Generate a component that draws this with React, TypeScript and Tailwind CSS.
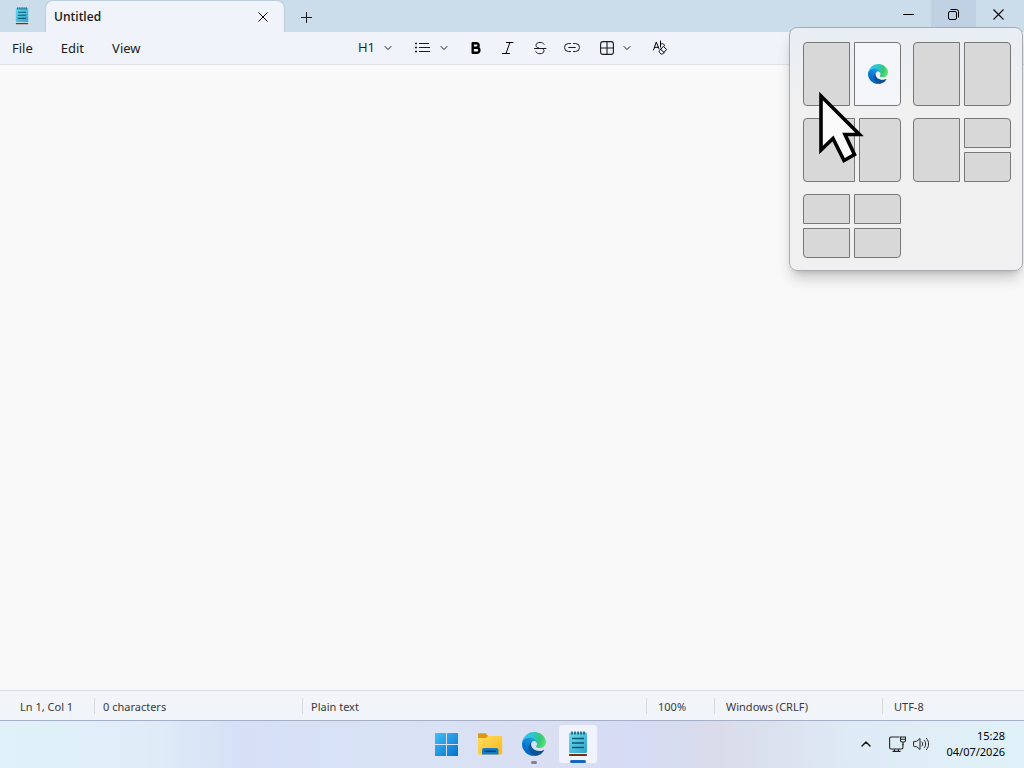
import React, { PropsWithChildren, useId, useState } from "react";
import { ChevronDown, ChevronUp } from "lucide-react";

type ToolButtonProps = PropsWithChildren<{
	label: string;
	menu?: boolean;
	className?: string;
}>;

type IconProps = {
	className?: string;
};

const statusItems = [
	{ text: "Ln 1, Col 1", className: "w-[94px] pl-5" },
	{ text: "0 characters", className: "w-[208px] border-l pl-2" },
	{ text: "Plain text", className: "flex-1 border-l pl-2" },
	{ text: "100%", className: "w-[68px] border-l pl-[11px]" },
	{ text: "Windows (CRLF)", className: "w-[168px] border-l pl-[11px]" },
	{ text: "UTF-8", className: "w-[142px] border-l pl-[11px]" },
];

export default function App() {
	return (
		<div className="relative flex h-screen flex-col overflow-hidden bg-[#f9f9f9] font-['Noto_Sans','Open_Sans',sans-serif] text-[#1b1b1b]">
			<TitleBar />
			<Toolbar />
			<Editor />
			<StatusBar />
			<Taskbar />
			<SnapFlyout />
			<Cursor />
		</div>
	);
}

function TitleBar() {
	return (
		<header className="flex h-8 shrink-0 bg-[#cbddea]">
			<div className="flex w-[45px] items-center justify-center pr-px">
				<NotepadIcon className="h-[18px] w-4" />
			</div>
			<div className="flex w-[240px] items-center justify-between rounded-t-lg border border-b-0 border-[#bccddb] bg-[#f0f4fa] pr-[15px] pl-2">
				<span className="font-['Open_Sans',sans-serif] text-xs font-semibold">Untitled</span>
				<button aria-label="Close tab" className="flex size-3 items-center justify-center">
					<CrossIcon className="size-[10px]" />
				</button>
			</div>
			<button aria-label="New tab" className="flex w-[43px] items-center justify-center pt-[3px]">
				<svg className="size-[11px]" viewBox="0 0 11 11" stroke="currentColor">
					<path d="M5.5 0v11M0 5.5h11" />
				</svg>
			</button>

			<div className="ml-auto flex h-7">
				<button aria-label="Minimize" className="flex w-[45px] items-center justify-center">
					<svg className="size-[11px]" viewBox="0 0 11 11" stroke="#000">
						<path d="M0 5.5h11" />
					</svg>
				</button>
				<button aria-label="Restore" className="flex w-[45px] items-center justify-center bg-[#bfd1e2]">
					<svg className="size-[11px]" viewBox="0 0 11 11" fill="none" stroke="#000">
						<rect x=".5" y="2.5" width="8" height="8" rx="1.5" />
						<path d="M2.5 .5h6a2 2 0 0 1 2 2v6" />
					</svg>
				</button>
				<button aria-label="Close" className="flex w-12 items-center justify-center pr-[3px]">
					<CrossIcon className="size-[11px]" />
				</button>
			</div>
		</header>
	);
}

function Toolbar() {
	return (
		<div className="grid h-[33px] shrink-0 grid-cols-[1fr_auto_1fr] items-center border-b border-[#dfe1e6] bg-[#f0f4fa]">
			<nav className="flex gap-7 pt-[2px] pl-3 text-[13px]">
				<button>File</button>
				<button>Edit</button>
				<button>View</button>
			</nav>
			<div className="flex h-8 items-center">
				<ToolButton label="Headings" menu className="w-14">
					<span className="font-['Open_Sans',sans-serif] text-[13px]">H1</span>
				</ToolButton>
				<ToolButton label="List" menu className="w-14">
					<svg className="h-3 w-4" viewBox="0 0 16 12" stroke="currentColor">
						<path d="M4 1.5h10M4 5.5h11M4 9.5h11" />
						<path d="M0 1.5h2M0 5.5h2M0 9.5h2" strokeWidth="1.6" />
					</svg>
				</ToolButton>
				<ToolButton label="Bold" className="w-8">
					<svg className="size-4" viewBox="0 0 16 16" fill="none" stroke="#000" strokeWidth="2.4" strokeLinejoin="round">
						<path d="M4.700 3.200h3.600a2.300 2.300 0 0 1 0 4.600H4.700zM4.700 7.800h4.200a2.500 2.500 0 0 1 0 5H4.700z" />
					</svg>
				</ToolButton>
				<ToolButton label="Italic" className="w-8">
					<svg className="size-4" viewBox="0 0 16 16" fill="none" stroke="#000" strokeLinecap="round">
						<path d="M6.500 2.500h6.500M2.500 13.500H9.500M9.900 2.500l-3.900 11" />
					</svg>
				</ToolButton>
				<ToolButton label="Strikethrough" className="w-8">
					<svg className="size-4" viewBox="0 0 16 16" fill="none" stroke="currentColor" strokeLinecap="round">
						<path d="M12 4.200C11.300 3 9.900 2.400 8 2.400c-2.300 0-4 1.100-4 2.900 0 1.500 1 2.200 2.800 2.700M2.500 8.500h11.500M10.300 8.500c1.100.5 1.700 1.200 1.700 2.300 0 1.800-1.600 2.900-4 2.900-2 0-3.500-.7-4.200-2" />
					</svg>
				</ToolButton>
				<ToolButton label="Link" className="w-8">
					<svg className="size-4" viewBox="0 0 16 16" fill="none" stroke="currentColor" strokeLinecap="round">
						<path d="M6.500 3.500H4.500a4 4 0 0 0 0 8h2M9.500 3.500h2a4 4 0 0 1 0 8h-2M4.700 7.500h6.600" />
					</svg>
				</ToolButton>
				<ToolButton label="Table" menu className="w-14">
					<svg className="size-[14px]" viewBox="0 0 14 14" fill="none" stroke="currentColor" strokeWidth="1.1">
						<rect x=".6" y=".6" width="12.800" height="12.800" rx="2.400" />
						<path d="M7 .6v12.800M.6 7h12.800" />
					</svg>
				</ToolButton>
				<ToolButton label="Clear formatting" className="w-8">
					<svg className="size-4" viewBox="0 0 16 16" fill="none" stroke="#000" strokeLinecap="round" strokeLinejoin="round">
						<path d="M1.500 10 4.300 2l2.800 7M2.500 7.300h3.700M8.500 1v6M8.500 4.500c1.500-1.800 4-.8 4 1.300" />
						<path d="m11.600 6.600 3 2.800-4 4.600c-.5.500-1 .5-1.500 0l-1.700-1.700c-.5-.5-.5-1 0-1.500zM8.800 9.500l3.300 3" />
					</svg>
				</ToolButton>
			</div>
		</div>
	);
}

function ToolButton({ label, menu = false, className = "", children }: ToolButtonProps) {
	return (
		<button aria-label={label} className={`flex h-8 items-center justify-center gap-[7px] ${className}`}>
			{children}
			{menu && <ChevronDown className="size-3" strokeWidth={2} />}
		</button>
	);
}

function Editor() {
	const [text, setText] = useState("");

	return (
		<textarea
			aria-label="Text editor"
			className="min-h-0 w-full flex-1 resize-none bg-[#f9f9f9] p-3 text-sm outline-none"
			value={text}
			onChange={e => setText(e.target.value)}
		/>
	);
}

function StatusBar() {
	return (
		<footer className="flex h-[30px] shrink-0 items-center border-t border-[#d9dbe6] bg-[#f1f4f9] text-[11px] text-[#3a3a3a]">
			{statusItems.map(item => (
				<div key={item.text} className={`flex h-4 items-center border-[#d6d9df] pt-[3px] ${item.className}`}>
					{item.text}
				</div>
			))}
		</footer>
	);
}

function Taskbar() {
	return (
		<div className="grid h-12 shrink-0 grid-cols-[1fr_auto_1fr] items-center border-t border-[#a6afc6] bg-linear-[to_right,#e0f1f8_0%,#dfedf8_14%,#d6dff6_24%,#d9e3f5_38%,#dadff3_52%,#d5dbf4_62%,#dadbea_70%,#deebf6_84%,#e0f1f8_100%] pb-[2px]">
			<div />
			<div className="flex gap-1">
				<button aria-label="Start" className="flex size-10 items-center justify-center">
					<svg className="size-6" viewBox="0 0 24 24">
						<defs>
							<linearGradient id="start" x1="0" y1="0" x2="24" y2="24" gradientUnits="userSpaceOnUse">
								<stop stopColor="#44c3f7" />
								<stop offset="1" stopColor="#0670cf" />
							</linearGradient>
						</defs>
						<path fill="url(#start)" d="M1 1h11v11H1zM13 1h11v11H13zM1 13h11v11H1zM13 13h11v11H13z" />
					</svg>
				</button>
				<button aria-label="File Explorer" className="flex size-10 items-center justify-center">
					<FolderIcon className="h-[22px] w-[26px]" />
				</button>
				<button aria-label="Microsoft Edge" className="relative flex size-10 items-center justify-center">
					<EdgeIcon className="size-6" />
					<span className="absolute inset-x-0 bottom-0 mx-auto h-[3px] w-[6px] rounded-full bg-[#7f828c]" />
				</button>
				<button aria-label="Notepad" className="relative flex size-10 items-center justify-center rounded border border-[#dcdfec] bg-[#f0f3fb]">
					<NotepadIcon className="h-[26px] w-[22px]" />
					<span className="absolute inset-x-0 bottom-0 mx-auto h-[3px] w-4 rounded-full bg-[#1567be]" />
				</button>
			</div>
			<div className="flex items-center justify-end pr-[19px]">
				<button aria-label="Show hidden icons" className="mr-[15px]">
					<ChevronUp className="size-4" strokeWidth={2.2} />
				</button>
				<button aria-label="Network and volume" className="flex gap-[7px]">
					<svg className="h-4 w-[17px]" viewBox="0 0 17 16" fill="none" stroke="#222" strokeWidth="1.100">
						<path d="M10.500 1H2A1.500 1.500 0 0 0 .6 2.500v9A1.500 1.500 0 0 0 2 13h10.500a1.500 1.500 0 0 0 1.400-1.500V8M5.500 13v2M9.500 13v2M3.500 15.400h8" />
						<path d="M11.500 1h5v3.500a1.500 1.500 0 0 1-1.500 1.500h-2a1.500 1.500 0 0 1-1.500-1.500zM11.500 3.200h5M14 6v3" />
					</svg>
					<svg className="h-4 w-[17px]" viewBox="0 0 17 16" fill="none" stroke="#222" strokeLinejoin="round" strokeLinecap="round">
						<path d="M.6 6.200v3.600a.8.8 0 0 0 .8.8h2.200L7 13.500V2.500L3.600 5.400H1.400a.8.8 0 0 0-.8.8z" />
						<path d="M9 6c1 1.200 1 2.800 0 4M11.200 4.200c2 2.200 2 5.400 0 7.600M13.400 2.300c3 3.300 3 8.100 0 11.400" />
					</svg>
				</button>
				<button className="ml-4 text-right text-[11px] leading-4 text-black">
					15:28
					<br />
					04/07/2026
				</button>
			</div>
		</div>
	);
}

function SnapFlyout() {
	return (
		<section aria-label="Snap layouts" className="absolute top-[27px] right-px z-10 grid grid-cols-[98px_98px] gap-3 rounded-lg border border-[#a9adb1] bg-linear-to-b from-[#e8eef4] via-[#f0f0f0] via-30% to-[#f0f0f0] pt-[14px] pr-[11px] pb-3 pl-[13px] shadow-lg shadow-black/20">
			<div className="grid h-16 grid-cols-2 gap-1">
				<SnapTile className="rounded-l" />
				<button aria-label="Snap Microsoft Edge right" className="flex items-center justify-center rounded-r border border-[#777] bg-[#f3f5f8]">
					<EdgeIcon className="size-5" />
				</button>
			</div>
			<div className="grid h-16 grid-cols-2 gap-1">
				<SnapTile className="rounded-l" />
				<SnapTile className="rounded-r" />
			</div>
			<div className="grid h-16 grid-cols-[52px_1fr] gap-1">
				<SnapTile className="rounded-l" />
				<SnapTile className="rounded-r" />
			</div>
			<div className="grid h-16 grid-cols-2 grid-rows-2 gap-1">
				<SnapTile className="row-span-2 rounded-l" />
				<SnapTile className="rounded-tr" />
				<SnapTile className="rounded-br" />
			</div>
			<div className="grid h-16 grid-cols-2 grid-rows-2 gap-1">
				<SnapTile className="rounded-tl" />
				<SnapTile className="rounded-tr" />
				<SnapTile className="rounded-bl" />
				<SnapTile className="rounded-br" />
			</div>
		</section>
	);
}

function SnapTile({ className = "" }: IconProps) {
	return <button aria-label="Snap zone" className={`border border-[#777] bg-[#d8d8d9] ${className}`} />;
}

function Cursor() {
	return (
		<svg className="pointer-events-none absolute top-[90px] left-[816px] z-20 h-[76px] w-[50px]" viewBox="0 0 50 76">
			<path d="M5 6v54l12-11.500L28 70.500l10.500-6-9.500-20h14.500z" fill="#fafafa" stroke="#000" strokeWidth="3.600" strokeMiterlimit="8" />
		</svg>
	);
}

function CrossIcon({ className = "" }: IconProps) {
	return (
		<svg className={className} viewBox="0 0 11 11" stroke="#000" strokeWidth="1.100">
			<path d="M.5 .5l10 10M10.500 .5l-10 10" />
		</svg>
	);
}

function NotepadIcon({ className = "" }: IconProps) {
	const id = useId();

	return (
		<svg className={className} viewBox="0 0 22 26">
			<defs>
				<linearGradient id={id} x1="0" y1="0" x2="1" y2="1">
					<stop stopColor="#6bdcf0" />
					<stop offset="1" stopColor="#2fa3c8" />
				</linearGradient>
			</defs>
			<rect x="2" y="20" width="18" height="5" rx="1" fill="#e8eef0" />
			<rect x="2" y="23" width="18" height="2" rx=".8" fill="#7a2c14" />
			<rect x="2" y="1.500" width="18" height="20.500" rx="1.200" fill={`url(#${id})`} />
			<path d="M5 .5v3M8 .5v3M11 .5v3M14 .5v3M17 .5v3" stroke="#14506c" strokeWidth="1.500" />
			<path d="M5 7.500h12M5 12h12M5 16.500h12" stroke="#0d5874" strokeWidth="1.600" />
		</svg>
	);
}

function FolderIcon({ className = "" }: IconProps) {
	const id = useId();

	return (
		<svg className={className} viewBox="0 0 26 22">
			<defs>
				<linearGradient id={id} x1="0" y1="0" x2="1" y2="1">
					<stop stopColor="#ffdc62" />
					<stop offset="1" stopColor="#fbb916" />
				</linearGradient>
			</defs>
			<path d="M1 1.500A1.200 1.200 0 0 1 2.200.3h6.500L11 3v4H1z" fill="#dc9610" />
			<path d="M1 5h8l2-2h13a1.200 1.200 0 0 1 1.200 1.200v16a1.200 1.200 0 0 1-1.200 1.200H2.200A1.200 1.200 0 0 1 1 20.200z" fill={`url(#${id})`} />
			<path d="M5 21.500V17a2 2 0 0 1 2-2h12.500a2 2 0 0 1 2 2v4.500z" fill="#1679c5" />
			<path d="M8 18.200h10.500" stroke="#07467f" strokeWidth="1.500" strokeLinecap="round" />
		</svg>
	);
}

function EdgeIcon({ className = "" }: IconProps) {
	const id = useId();

	return (
		<svg className={className} viewBox="4.600 4.900 256 256">
			<defs>
				<linearGradient id={`${id}a`} x1="63" y1="182" x2="241" y2="182" gradientUnits="userSpaceOnUse">
					<stop stopColor="#0c59a4" />
					<stop offset="1" stopColor="#114a8b" />
				</linearGradient>
				<linearGradient id={`${id}b`} x1="150" y1="100" x2="46" y2="214" gradientUnits="userSpaceOnUse">
					<stop stopColor="#1b9de2" />
					<stop offset=".4" stopColor="#1288d8" />
					<stop offset="1" stopColor="#0067c8" />
				</linearGradient>
				<radialGradient id={`${id}c`} cx="30" cy="50" r="250" gradientUnits="userSpaceOnUse">
					<stop stopColor="#35c1f1" />
					<stop offset=".4" stopColor="#2cc5c9" />
					<stop offset=".7" stopColor="#36c878" />
					<stop offset="1" stopColor="#66eb6e" />
				</radialGradient>
			</defs>
			<path fill={`url(#${id}a)`} d="M235.680 196.460a93.730 93.730 0 0 1-10.540 4.710 101.870 101.870 0 0 1-35.900 6.460c-47.320 0-88.540-32.550-88.540-74.320A31.480 31.480 0 0 1 117.130 105.960c-42.800 1.800-53.800 46.400-53.800 72.530 0 73.880 68.090 81.370 82.760 81.370 7.910 0 19.840-2.300 27-4.560l1.310-.44a128.340 128.340 0 0 0 66.600-52.800 4 4 0 0 0-5.320-5.600z" />
			<path fill={`url(#${id}b)`} d="M110.340 246.340A79.200 79.200 0 0 1 87.600 225a80.720 80.720 0 0 1 29.530-120c3.120-1.470 8.450-4.130 15.540-4a32.350 32.350 0 0 1 25.690 13 31.880 31.880 0 0 1 6.360 18.660c0-.21 24.460-79.600-80-79.600-43.900 0-80 41.660-80 78.210a130.150 130.150 0 0 0 12.110 56 128 128 0 0 0 156.380 67.110 75.550 75.550 0 0 1-62.780-8z" />
			<path fill={`url(#${id}c)`} d="M156.940 153.780c-.81 1.050-3.300 2.500-3.300 5.660 0 2.610 1.700 5.120 4.720 7.230 14.380 10 41.490 8.680 41.560 8.680a59.560 59.560 0 0 0 30.270-8.350A61.380 61.380 0 0 0 260.630 114.160c.26-22.410-8-37.310-11.340-43.910C228.090 28.760 182.350 4.920 132.610 4.920a128 128 0 0 0-128 126.200c.48-36.540 36.800-66.050 80-66.050 3.500 0 23.460.34 42 10.070 16.340 8.580 24.900 18.940 30.850 29.210 6.180 10.670 7.280 24.150 7.280 29.520s-2.740 13.330-7.800 19.910z" />
		</svg>
	);
}
